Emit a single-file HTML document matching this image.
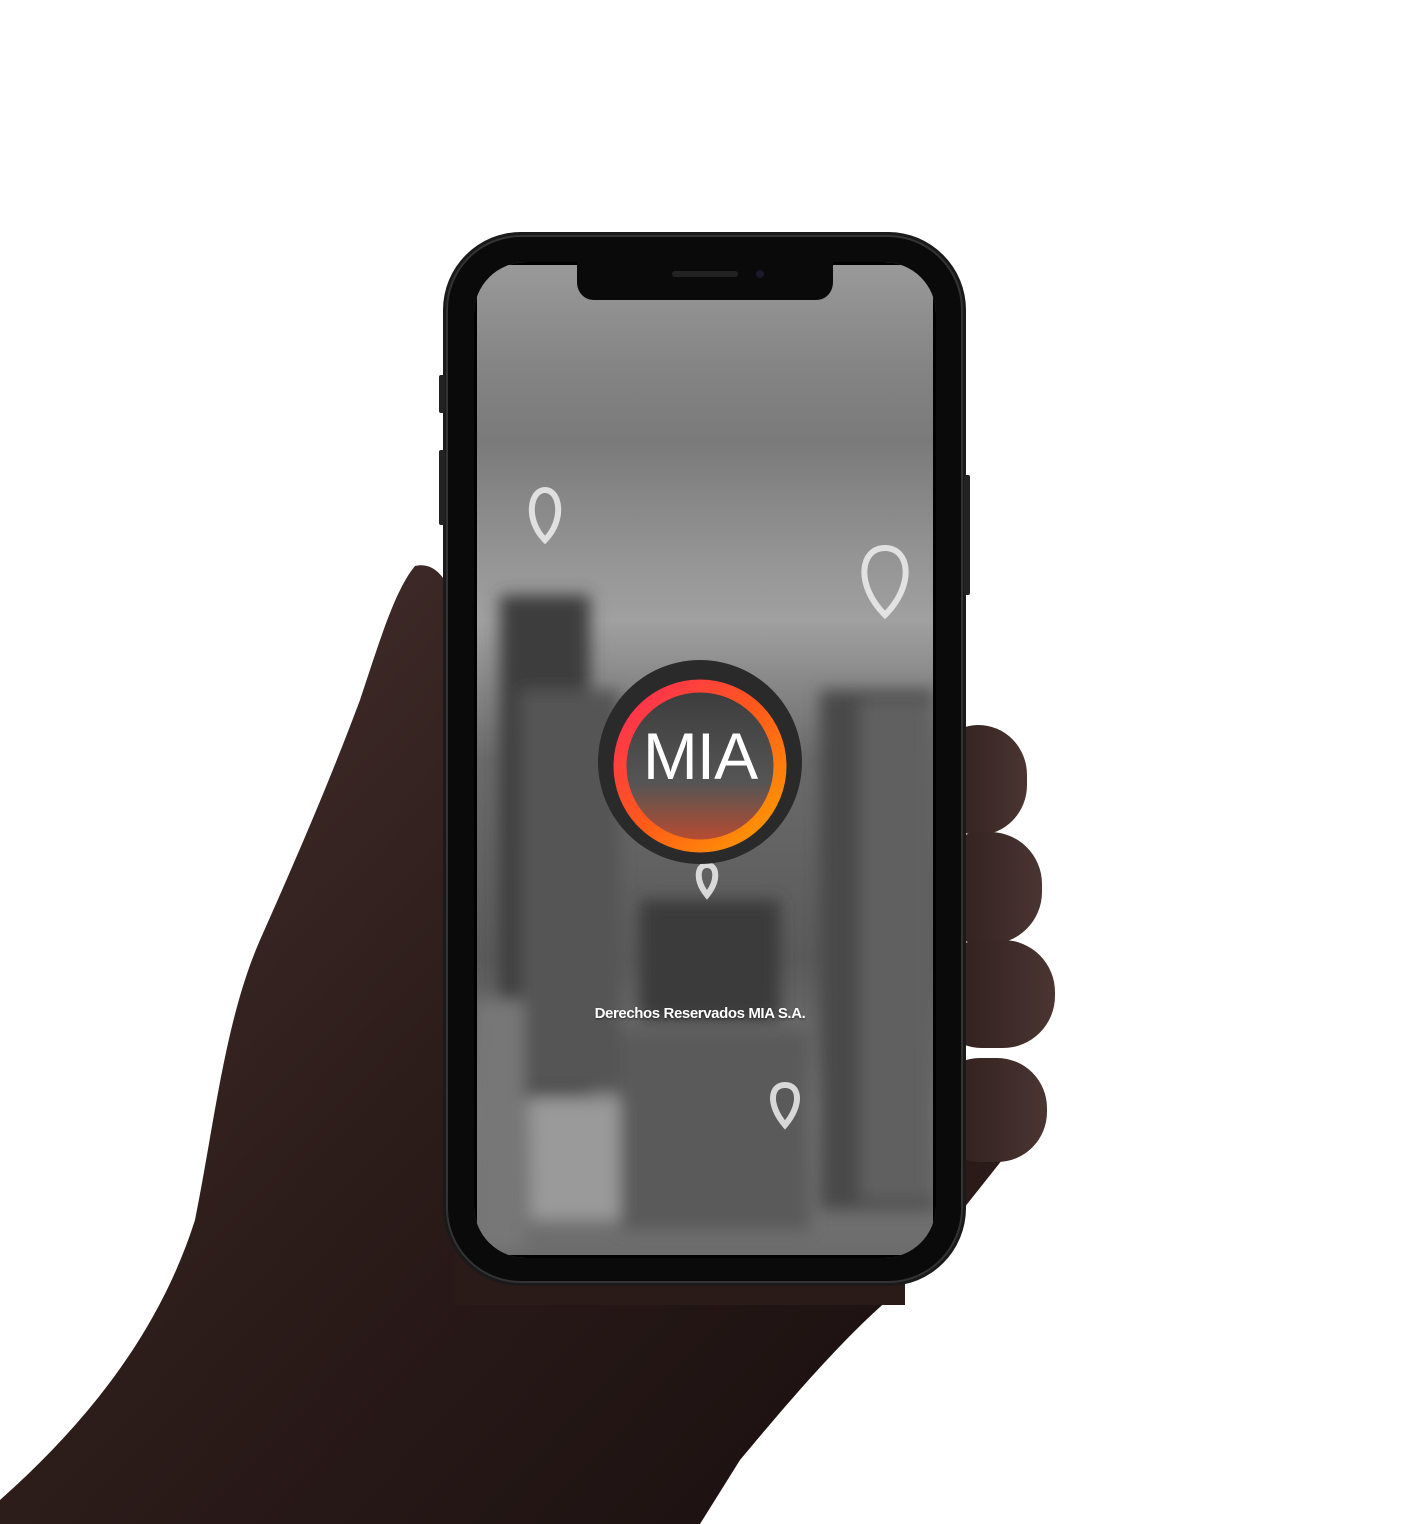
<!DOCTYPE html>
<html><head><meta charset="utf-8"><style>
html,body{margin:0;padding:0;background:#fff;}
body{width:1402px;height:1524px;position:relative;overflow:hidden;font-family:"Liberation Sans",sans-serif;}
svg{position:absolute;left:0;top:0;}
.txt{position:absolute;left:560px;width:280px;top:1005px;text-align:center;color:#fff;font-weight:bold;font-size:15px;letter-spacing:-0.4px;text-shadow:0 1px 2px rgba(0,0,0,.5);}
.mia{position:absolute;left:600px;width:200px;top:718px;text-align:center;color:#fff;font-size:66px;letter-spacing:-1px;font-family:"Liberation Sans",sans-serif;}
</style></head><body>
<svg width="1402" height="1524" viewBox="0 0 1402 1524">
<defs>
<linearGradient id="hand" x1="0" y1="0" x2="1" y2="1">
<stop offset="0" stop-color="#4a3431"/><stop offset="0.5" stop-color="#2c1c1a"/><stop offset="1" stop-color="#1a1010"/>
</linearGradient>
<linearGradient id="fing" x1="0" y1="0" x2="1" y2="0">
<stop offset="0" stop-color="#2a1b19"/><stop offset="1" stop-color="#4a3532"/>
</linearGradient>
<linearGradient id="scr" x1="0" y1="0" x2="0" y2="1">
<stop offset="0" stop-color="#9a9a9a"/><stop offset="0.1" stop-color="#858585"/><stop offset="0.18" stop-color="#7a7a7a"/>
<stop offset="0.3" stop-color="#959595"/><stop offset="0.36" stop-color="#a0a0a0"/><stop offset="0.5" stop-color="#6a6a6a"/><stop offset="0.7" stop-color="#5a5a5a"/>
<stop offset="0.85" stop-color="#7a7a7a"/><stop offset="1" stop-color="#6c6c6c"/>
</linearGradient>
<linearGradient id="ring" x1="0" y1="0" x2="1" y2="1">
<stop offset="0" stop-color="#ff2a5a"/><stop offset="0.5" stop-color="#ff5a1a"/><stop offset="1" stop-color="#ffa000"/>
</linearGradient>
<linearGradient id="disc" x1="0" y1="0" x2="0" y2="1">
<stop offset="0" stop-color="#3a3a3a"/><stop offset="0.6" stop-color="#555"/><stop offset="1" stop-color="#c84a2a"/>
</linearGradient>
<clipPath id="sc"><rect x="474" y="262" width="462" height="996" rx="52"/></clipPath>
<filter id="bl"><feGaussianBlur stdDeviation="8"/></filter>
</defs>
<!-- hand palm -->
<path d="M0 1524 L0 1500 C90 1420 160 1330 195 1220 C215 1120 225 1020 260 940 C300 850 330 780 360 700 C380 640 395 590 415 566 C440 560 455 590 460 630 L460 1300 L900 1290 C850 1330 790 1400 740 1460 L700 1524 Z" fill="url(#hand)"/>
<rect x="455" y="1100" width="450" height="205" fill="#2a1b19"/>
<path d="M940 1150 L1010 1150 L895 1295 L900 1200 Z" fill="#2a1b19"/>
<!-- fingers -->
<rect x="930" y="725" width="97" height="110" rx="50" fill="url(#fing)"/>
<rect x="930" y="832" width="112" height="112" rx="52" fill="url(#fing)"/>
<rect x="930" y="940" width="125" height="108" rx="52" fill="url(#fing)"/>
<rect x="930" y="1058" width="117" height="104" rx="50" fill="url(#fing)"/>
<!-- phone -->
<rect x="443" y="232" width="523" height="1054" rx="78" fill="#1a1a1a"/>
<rect x="447" y="236" width="515" height="1046" rx="74" fill="#0a0a0a" stroke="#333" stroke-width="2"/>
<rect x="439" y="375" width="6" height="38" rx="2" fill="#222"/>
<rect x="439" y="450" width="6" height="75" rx="2" fill="#222"/>
<rect x="964" y="475" width="6" height="120" rx="2" fill="#222"/>
<g clip-path="url(#sc)">
<rect x="474" y="262" width="462" height="996" fill="url(#scr)"/>
<g filter="url(#bl)">
<rect x="500" y="595" width="90" height="500" fill="#3e3e3e"/>
<rect x="520" y="690" width="100" height="400" fill="#555"/>
<rect x="820" y="690" width="115" height="520" fill="#4a4a4a"/>
<rect x="860" y="700" width="75" height="500" fill="#606060"/>
<rect x="640" y="900" width="140" height="120" fill="#3a3a3a"/>
<rect x="530" y="1100" width="90" height="120" fill="#9a9a9a"/>
<rect x="620" y="1030" width="190" height="200" fill="#5a5a5a"/>
<rect x="474" y="1000" width="50" height="250" fill="#777"/>
</g>
<g fill="none" stroke="#eee" stroke-width="6" opacity="0.85">
<path d="M545 540 C525 520 530 490 545 490 C560 490 565 520 545 540 Z"/>
<path d="M885 615 C855 585 860 548 885 548 C910 548 915 585 885 615 Z"/>
<path d="M785 1125 C768 1105 770 1085 785 1085 C800 1085 802 1105 785 1125 Z"/>
<path d="M707 895 C695 880 697 865 707 865 C717 865 719 880 707 895 Z"/>
</g>
<rect x="474" y="262" width="462" height="996" fill="none" stroke="#000" stroke-width="6"/>
</g>
<!-- notch -->
<path d="M577 262 L833 262 L833 282 C833 292 826 300 816 300 L594 300 C584 300 577 292 577 282 Z" fill="#0a0a0a"/>
<rect x="672" y="271" width="66" height="6" rx="3" fill="#222"/>
<circle cx="760" cy="274" r="4" fill="#1a1a2a"/>
<!-- logo -->
<circle cx="700" cy="762" r="102" fill="#2a2a2a"/>
<circle cx="700" cy="766" r="84" fill="url(#disc)"/>
<circle cx="700" cy="766" r="80" fill="none" stroke="url(#ring)" stroke-width="13"/>
</svg>
<div class="mia">MIA</div>
<div class="txt">Derechos Reservados MIA S.A.</div>
</body></html>
